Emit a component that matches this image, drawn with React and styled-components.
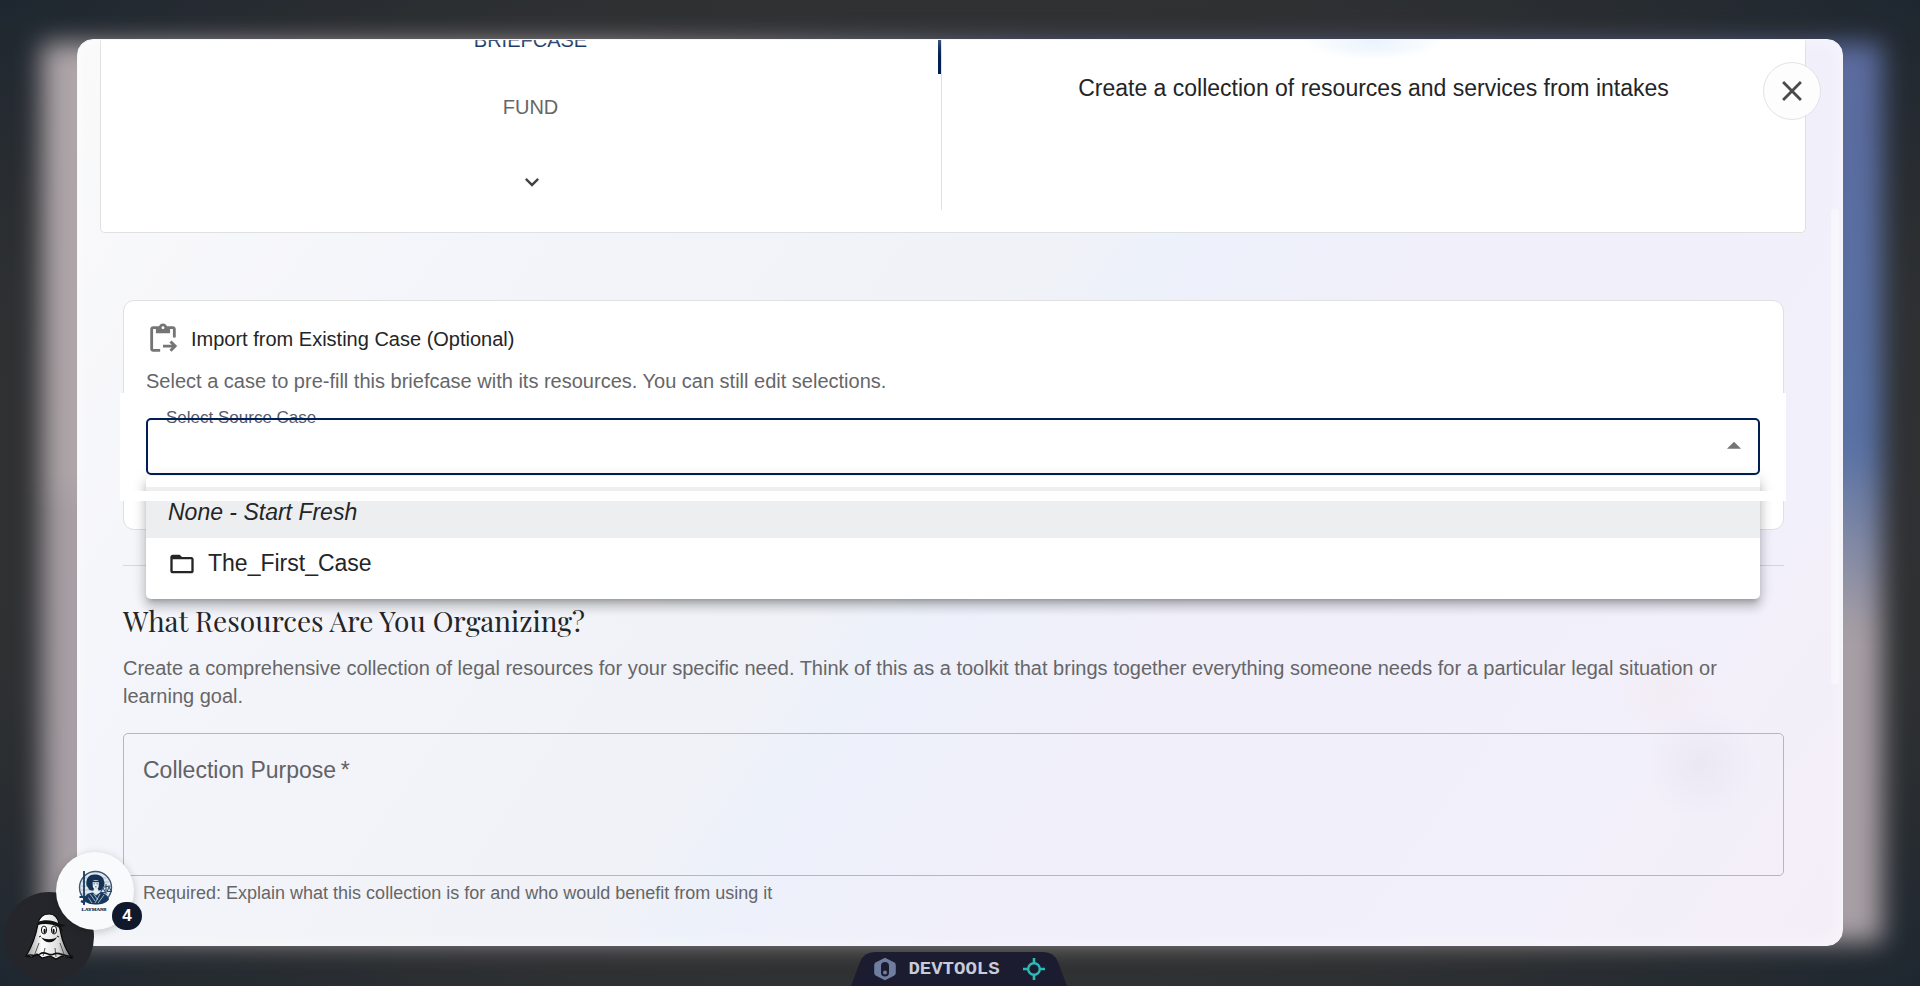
import styled, { createGlobalStyle } from 'styled-components';
import {
  MdArrowDropUp,
  MdClose,
  MdContentPasteGo,
  MdFolderOpen,
  MdKeyboardArrowDown,
} from 'react-icons/md';

const tabs = [
  { label: 'Briefcase', active: true },
  { label: 'Fund', active: false },
];

function CaseMenu() {
  return (
    <Menu>
      <li>
        <MenuItem type="button" $selected>
          <em>None - Start Fresh</em>
        </MenuItem>
      </li>
      <li>
        <MenuItem type="button">
          <MdFolderOpen size={28} />
          The_First_Case
        </MenuItem>
      </li>
    </Menu>
  );
}

function GhostIcon() {
  return (
    <svg width="50" height="48" viewBox="0 0 50 48">
      <defs>
        <linearGradient id="sheet" x1="0" x2="1">
          <stop offset="0" stopColor="#9a9a9a" />
          <stop offset="0.35" stopColor="#fff" />
          <stop offset="0.7" stopColor="#ddd" />
          <stop offset="1" stopColor="#666" />
        </linearGradient>
      </defs>
      <path
        d="M25 1c-6 0-10 4-11 10C12 22 9 32 2 43l6 1 5-3 5 4 8-2 6 3 6-3 10 2C39 34 37 22 35 11 34 5 31 1 25 1z"
        fill="url(#sheet)"
        stroke="#080808"
        strokeWidth="1.2"
      />
      <path d="M14 9c6-3 16-2 22 2l6 1-5 2 2 5-5-5C29 11 20 10 14 12z" fill="#111" />
      <path d="M10 43l5-13M19 43l2-8M32 44l-1-9M41 44l-5-14" stroke="#555" fill="none" />
      <path d="M2 43c6-3 9 2 14-2s9 3 14 0 11 4 19 2" stroke="#111" strokeWidth="1.6" fill="none" />
      <ellipse cx="20" cy="17" rx="2.6" ry="4" fill="#fff" stroke="#111" />
      <ellipse cx="30" cy="17" rx="2.6" ry="4" fill="#fff" stroke="#111" />
      <ellipse cx="20.6" cy="18" rx="1.1" ry="2.2" fill="#111" />
      <ellipse cx="29.6" cy="18" rx="1.1" ry="2.2" fill="#111" />
      <path d="M17 24c4 7 13 7 16 0-4 3-12 3-16 0z" fill="#111" />
      <path d="M17 23l-2 1M33 23l2 1" stroke="#111" fill="none" />
    </svg>
  );
}

function LaymansLogo() {
  return (
    <svg width="38" height="42" viewBox="0 0 38 42">
      <circle cx="19.5" cy="17.5" r="16" fill="#dfe6ec" stroke="#3c5672" strokeWidth="1.4" />
      <path d="M8 8h22M6 12h27M5 16h29M5 20h29M6 24h26" stroke="#a9b9c8" strokeWidth="0.9" />
      <path
        d="M19 4.500c-5-.5-8 3-8.500 7-.8 3 .5 5 1.500 6 .5 2 2 3 4 3h7c2 0 3.500-1 4-3 1.500-1.500 2-4 1-6.500C27.500 7 24 4.500 19 4.500z"
        fill="#123154"
      />
      <path d="M16.500 11c2-1.500 4.500-1.500 6.500 0l-.4 6c-.9 3-4.800 3-5.700 0z" fill="#e6edf3" />
      <path d="M15 11.500h9.500" stroke="#123154" strokeWidth="1.4" />
      <path d="M17.500 13.800h1.500M20.500 13.800H22M19 16.800h1.600" stroke="#123154" strokeWidth="0.7" />
      <path d="M18 18.500h4l1 5h-6z" fill="#e6edf3" />
      <path d="M8 31c0-6 4-8 9-8.500l3 3 4-3c5 .5 8 3 9 7-3 4-8 5-13 5-5 0-9-1-12-3.500z" fill="#17395f" />
      <path d="M14 24l5 7M17.500 24l4.500 6M24 24l-5 9M28 25l-6 8M12 27l4 6" stroke="#dfe8ef" strokeWidth="0.7" />
      <path d="M8 1v34" stroke="#17395f" strokeWidth="1.8" />
      <path d="M3.500 27h9M7 29.500l6 1.500M5 31l4 2" stroke="#17395f" strokeWidth="2" />
      <path d="M25 17.500l9.500-1.500M30 14v10M27 18l-2.500 4.500h5zM33 17l-2 4.500h4.500z" stroke="#17395f" fill="none" strokeWidth="0.9" />
      <text
        x="18"
        y="41"
        textAnchor="middle"
        fontFamily="'Liberation Serif', serif"
        fontWeight="700"
        fontSize="5"
        stroke="#12304f"
        strokeWidth="0.2"
        fill="#12304f"
      >
        LAYMANS
      </text>
    </svg>
  );
}

function HexIcon() {
  return (
    <svg width="24" height="24" viewBox="0 0 24 24">
      <path d="M12 .8l9 4.4q1.800 1 1.800 2.800v8q0 1.800-1.800 2.800l-9 4.400-9-4.400Q1.200 17.800 1.200 16V8Q1.200 6.200 3 5.200z" fill="#6f7d9f" />
      <rect x="8" y="5" width="8" height="14.500" rx="4" fill="#1c1c31" />
      <circle cx="12" cy="15.500" r="2" fill="#6f7d9f" />
    </svg>
  );
}

function TargetIcon() {
  return (
    <svg width="22" height="22" viewBox="0 0 22 22" fill="none" stroke="#2cbab6">
      <circle cx="11" cy="11" r="5.800" strokeWidth="2.400" />
      <path d="M11 0v5M11 17v5M0 11h5M17 11h5" strokeWidth="2.600" />
    </svg>
  );
}

function App() {
  return (
    <Backdrop>
      <GlobalStyle />
      <Modal role="dialog" aria-label="Create briefcase">
        <CloseButton type="button" aria-label="Close">
          <MdClose size={34} />
        </CloseButton>

        <TypeCard>
          <TabList>
            {tabs.map((tab) => (
              <Tab key={tab.label} type="button" $active={tab.active}>
                {tab.label}
              </Tab>
            ))}
            <ScrollButton type="button" aria-label="Scroll down">
              <MdKeyboardArrowDown size={28} />
            </ScrollButton>
          </TabList>
          <TypeSummary>Create a collection of resources and services from intakes</TypeSummary>
        </TypeCard>

        <Form>
          <ImportCard>
            <ImportTitle>
              <MdContentPasteGo size={34} />
              <span>Import from Existing Case (Optional)</span>
            </ImportTitle>
            <Description>
              Select a case to pre-fill this briefcase with its resources. You can still edit selections.
            </Description>
            <SelectField>
              <SelectLabel htmlFor="source-case">Select Source Case</SelectLabel>
              <Select id="source-case" defaultValue="">
                <option value="" aria-label="None" />
              </Select>
              <SelectArrow size={34} />
              <CaseMenu />
            </SelectField>
          </ImportCard>

          <Divider />

          <Heading>What Resources Are You Organizing?</Heading>
          <Description>
            Create a comprehensive collection of legal resources for your specific need. Think of this as a toolkit
            that brings together everything someone needs for a particular legal situation or learning goal.
          </Description>

          <PurposeField>
            <PurposeLabel htmlFor="purpose">Collection Purpose&thinsp;*</PurposeLabel>
            <Textarea id="purpose" aria-describedby="purpose-help" />
          </PurposeField>
          <HelperText id="purpose-help">
            Required: Explain what this collection is for and who would benefit from using it
          </HelperText>
        </Form>
        <ScrollThumb />
      </Modal>

      <GhostButton type="button" aria-label="Assistant">
        <GhostIcon />
      </GhostButton>
      <LogoButton type="button" aria-label="Laymans">
        <LaymansLogo />
        <Badge>4</Badge>
      </LogoButton>

      <DevtoolsBar>
        <DevtoolsShape viewBox="0 0 216 34" preserveAspectRatio="none">
          <path d="M0 34L9 10Q13 0 24 0H192Q203 0 207 10L216 34z" fill="#1c1c31" />
        </DevtoolsShape>
        <HexIcon />
        <span>DEVTOOLS</span>
        <TargetIcon />
      </DevtoolsBar>
    </Backdrop>
  );
}

const GlobalStyle = createGlobalStyle`
  * {
    box-sizing: border-box;
  }
  body {
    margin: 0;
    overflow: hidden;
    font-family: 'Liberation Sans', Arial, sans-serif;
    color: #242526;
  }
  button {
    font-family: inherit;
    color: inherit;
    border: none;
    padding: 0;
    cursor: pointer;
  }
`;

const Backdrop = styled.div`
  position: relative;
  height: 100vh;
  padding: 39px 77px 40px;
  background: radial-gradient(ellipse at center, #333333 50%, #2e3032 75%, #1e2730 100%);
  overflow: hidden;
  /* light page showing through around the dialog */
  &::before {
    content: '';
    position: absolute;
    inset: 43px 38px 44px 42px;
    background:
      linear-gradient(to bottom, #5b6b9e 0%, #5972a5 45%, #a89fa5 66%) right / 60px 100% no-repeat,
      linear-gradient(to bottom, transparent 50%, #a79fa4 50%),
      linear-gradient(to right, #aea5a9 30%, #5d6287 55%);
    filter: blur(13px);
  }
`;

const Modal = styled.div`
  position: relative;
  height: 100%;
  display: flex;
  flex-direction: column;
  padding: 0 36px 0 22px;
  border: 1px solid #f6f6fa;
  border-radius: 16px;
  overflow: hidden;
  background:
    radial-gradient(circle at 92% 80%, #8c8ca814, transparent 56px),
    radial-gradient(circle at 90% 72%, #ffb49612, transparent 48px),
    linear-gradient(125deg, #fafafa 0%, #f4f5fa 22%, #f0f2f7 46%, #edf1fa 52%, #f0effa 62%, #f2f0fa 86%, #f5eef8 100%);
  &::after {
    content: '';
    position: absolute;
    inset: 0;
    border-radius: 16px;
    box-shadow: inset 0 0 18px #ffffff80;
    pointer-events: none;
  }
`;

const CloseButton = styled.button`
  position: absolute;
  top: 22px;
  right: 21px;
  z-index: 2;
  width: 58px;
  height: 58px;
  display: flex;
  align-items: center;
  justify-content: center;
  border: 1px solid #e2e2e4;
  border-radius: 50%;
  background: #fdfdfe;
  color: #4a4a4c;
`;

const TypeCard = styled.section`
  flex: none;
  display: grid;
  grid-template-columns: 1fr 1fr;
  gap: 22px;
  padding: 0 22px 22px;
  background: white;
  border: 1px solid #e0e0e0;
  border-top: none;
  border-radius: 0 0 5px 5px;
`;

const TabList = styled.div`
  height: 170px;
  display: flex;
  flex-direction: column;
  justify-content: flex-end;
  overflow: hidden;
  border-right: 1px solid #e0e0e0;
`;

const Tab = styled.button`
  flex: none;
  height: 67px;
  background: none;
  border-right: 3px solid ${({ $active }) => ($active ? '#001f54' : 'transparent')};
  color: ${({ $active }) => ($active ? '#001f54' : '#666')};
  font-size: 20px;
  text-transform: uppercase;
`;

const ScrollButton = styled.button`
  flex: none;
  height: 56px;
  margin-top: 13px;
  display: flex;
  align-items: center;
  justify-content: center;
  background: none;
  color: #444;
`;

const TypeSummary = styled.p`
  margin: 0;
  padding-top: 32px;
  font-size: 23px;
  line-height: 32px;
  text-align: center;
  background: radial-gradient(ellipse 72px 20px at 50% 0, #e4f0fd, transparent);
`;

const Form = styled.form`
  flex: 1;
  display: flex;
  flex-direction: column;
  padding: 67px 22px 0 23px;
`;

const ImportCard = styled.section`
  padding: 21px 23px 28px 22px;
  background: white;
  border: 1px solid #e0e0e0;
  border-radius: 11px;
`;

const ImportTitle = styled.h3`
  display: flex;
  align-items: center;
  gap: 11px;
  margin: 0 0 11px;
  font-size: 20px;
  font-weight: 400;
  line-height: 34px;
  svg {
    color: #757575;
  }
`;

const Description = styled.p`
  margin: 0;
  color: #666668;
  font-size: 20px;
  line-height: 28px;
`;

const SelectField = styled.div`
  position: relative;
  display: flex;
  margin: -2px -26px 0;
  padding: 25px 26px 26px;
  background: white;
  &::after {
    content: '';
    position: absolute;
    inset: auto 0 0;
    height: 10px;
    z-index: 2;
    background: white;
  }
`;

const SelectLabel = styled.label`
  position: absolute;
  top: 15px;
  left: 46px;
  color: #565b6b;
  font-size: 17px;
  line-height: 20px;
`;

const Select = styled.select`
  position: relative;
  flex: 1;
  height: 57px;
  padding: 0 18px;
  appearance: none;
  background: transparent;
  border: 2px solid #001f54;
  border-radius: 5px;
  font: inherit;
  font-size: 23px;
  outline: none;
`;

const SelectArrow = styled(MdArrowDropUp)`
  position: absolute;
  top: 36px;
  right: 35px;
  color: #757575;
`;

const Menu = styled.ul`
  position: absolute;
  top: 83px;
  left: 26px;
  right: 26px;
  z-index: 1;
  margin: 0;
  padding: 11px 0 10px;
  list-style: none;
  background: white;
  border-radius: 5px;
  box-shadow:
    0 5px 5px -3px #00000033,
    0 8px 10px 1px #00000024,
    0 3px 14px 2px #0000001f;
`;

const MenuItem = styled.button`
  width: 100%;
  height: 51px;
  display: flex;
  align-items: center;
  gap: 12px;
  padding: 0 22px;
  background: ${({ $selected }) => ($selected ? '#edeef0' : 'transparent')};
  font-size: 23px;
`;

const Divider = styled.hr`
  width: 100%;
  margin: 35px 0 33px;
  border: none;
  border-top: 1px solid #0000001f;
`;

const Heading = styled.h2`
  margin: 0 0 11px;
  font-family: 'Playfair Display', 'Liberation Serif', serif;
  font-size: 28px;
  font-weight: 400;
  line-height: 44px;
`;

const PurposeField = styled.div`
  position: relative;
  display: flex;
  margin-top: 23px;
`;

const PurposeLabel = styled.label`
  position: absolute;
  top: 21px;
  left: 20px;
  color: #626265;
  font-size: 23px;
  line-height: 32px;
`;

const Textarea = styled.textarea`
  flex: 1;
  height: 143px;
  padding: 22px 20px;
  resize: none;
  background: transparent;
  border: 1px solid #b6b6bb;
  border-radius: 5px;
  font: inherit;
  font-size: 23px;
`;

const HelperText = styled.p`
  margin: 3px 20px 0;
  color: #666668;
  font-size: 18px;
  line-height: 28px;
`;

const ScrollThumb = styled.div`
  position: absolute;
  top: 169px;
  right: 3px;
  width: 8px;
  height: 475px;
  border-radius: 4px;
  background: #f7f6fc;
`;

const GhostButton = styled.button`
  position: absolute;
  left: 4px;
  bottom: 4px;
  width: 90px;
  height: 90px;
  display: flex;
  align-items: center;
  justify-content: center;
  border-radius: 50%;
  background: #25262b;
`;

const LogoButton = styled.button`
  position: absolute;
  left: 56px;
  bottom: 56px;
  width: 78px;
  height: 78px;
  display: flex;
  align-items: center;
  justify-content: center;
  border-radius: 50%;
  background: #f8fafc;
  box-shadow: 0 2px 8px #00000033;
`;

const Badge = styled.span`
  position: absolute;
  right: -8px;
  bottom: 0;
  width: 30px;
  height: 28px;
  border-radius: 14px;
  background: #10192c;
  color: white;
  font-size: 17px;
  font-weight: 700;
  line-height: 28px;
`;

const DevtoolsBar = styled.div`
  position: absolute;
  left: 50%;
  bottom: 0;
  width: 216px;
  height: 34px;
  margin-left: -109px;
  padding: 0 22px;
  display: flex;
  align-items: center;
  justify-content: space-between;
  color: #c6ccda;
  font-family: 'Liberation Mono', monospace;
  font-size: 19px;
  font-weight: 700;
  > * {
    position: relative;
  }
  > span {
    margin-right: 12px;
  }
`;

const DevtoolsShape = styled.svg`
  && {
    position: absolute;
  }
  inset: 0;
  width: 100%;
  height: 100%;
`;

export default App;
